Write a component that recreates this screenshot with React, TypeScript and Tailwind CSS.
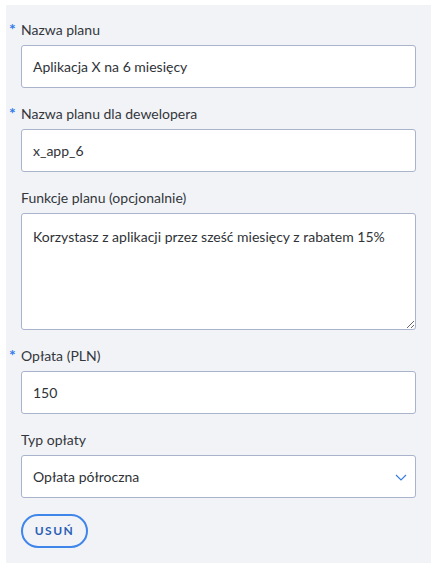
import React from 'react';

interface FieldProps {
  label: string;
  required?: boolean;
  children: React.ReactNode;
}

const Field: React.FC<FieldProps> = ({ label, required, children }) => {
  return (
    <div className="flex flex-col">
      <label className="relative mb-[5px] text-[14px] leading-[20px] text-[#33373b]">
        {required && (
          <span className="absolute -left-[12px] top-[1px] text-[16px] leading-[16px] font-bold text-[#2f7be8]">*</span>
        )}
        {label}
      </label>
      {children}
    </div>
  );
};

const inputClass =
  'h-[43px] w-full rounded-[3px] border border-[#aab3cc] bg-white px-[11px] text-[14px] text-[#2f3337] outline-none';

export default function App() {
  return (
    <div className="min-h-[572px] bg-white pl-[6px] pt-[5px]" style={{ fontFamily: 'Lato, "Noto Sans", sans-serif' }}>
      <div className="flex w-[425px] flex-col gap-[16px] bg-[#f2f3f7] px-[15px] pb-[15px] pt-[15px]">
        <Field label="Nazwa planu" required>
          <input className={inputClass} defaultValue="Aplikacja X na 6 miesięcy" />
        </Field>
        <Field label="Nazwa planu dla dewelopera" required>
          <input className={inputClass} defaultValue="x_app_6" />
        </Field>
        <Field label="Funkcje planu (opcjonalnie)">
          <textarea
            className="h-[117px] w-full rounded-[3px] border border-[#aab3cc] bg-white px-[11px] py-[13px] text-[14px] leading-[20px] text-[#2f3337] outline-none"
            defaultValue="Korzystasz z aplikacji przez sześć miesięcy z rabatem 15%"
          />
        </Field>
        <Field label="Opłata (PLN)" required>
          <input className={inputClass} defaultValue="150" />
        </Field>
        <Field label="Typ opłaty">
          <div className="relative flex h-[43px] w-full items-center rounded-[3px] border border-[#aab3cc] bg-white px-[11px] text-[14px] text-[#2f3337]">
            Opłata półroczna
            <svg className="absolute right-[8px] top-[18px]" width="12" height="7" viewBox="0 0 12 7" fill="none">
              <path d="M1 1l5 5 5-5" stroke="#3b7ddd" strokeWidth="1.2" />
            </svg>
          </div>
        </Field>
        <div>
          <button className="h-[34px] w-[67px] rounded-full border-2 border-[#3f86ea] text-[12px] font-bold tracking-[1.5px] text-[#2b5fb4]">
            USUŃ
          </button>
        </div>
      </div>
    </div>
  );
}
